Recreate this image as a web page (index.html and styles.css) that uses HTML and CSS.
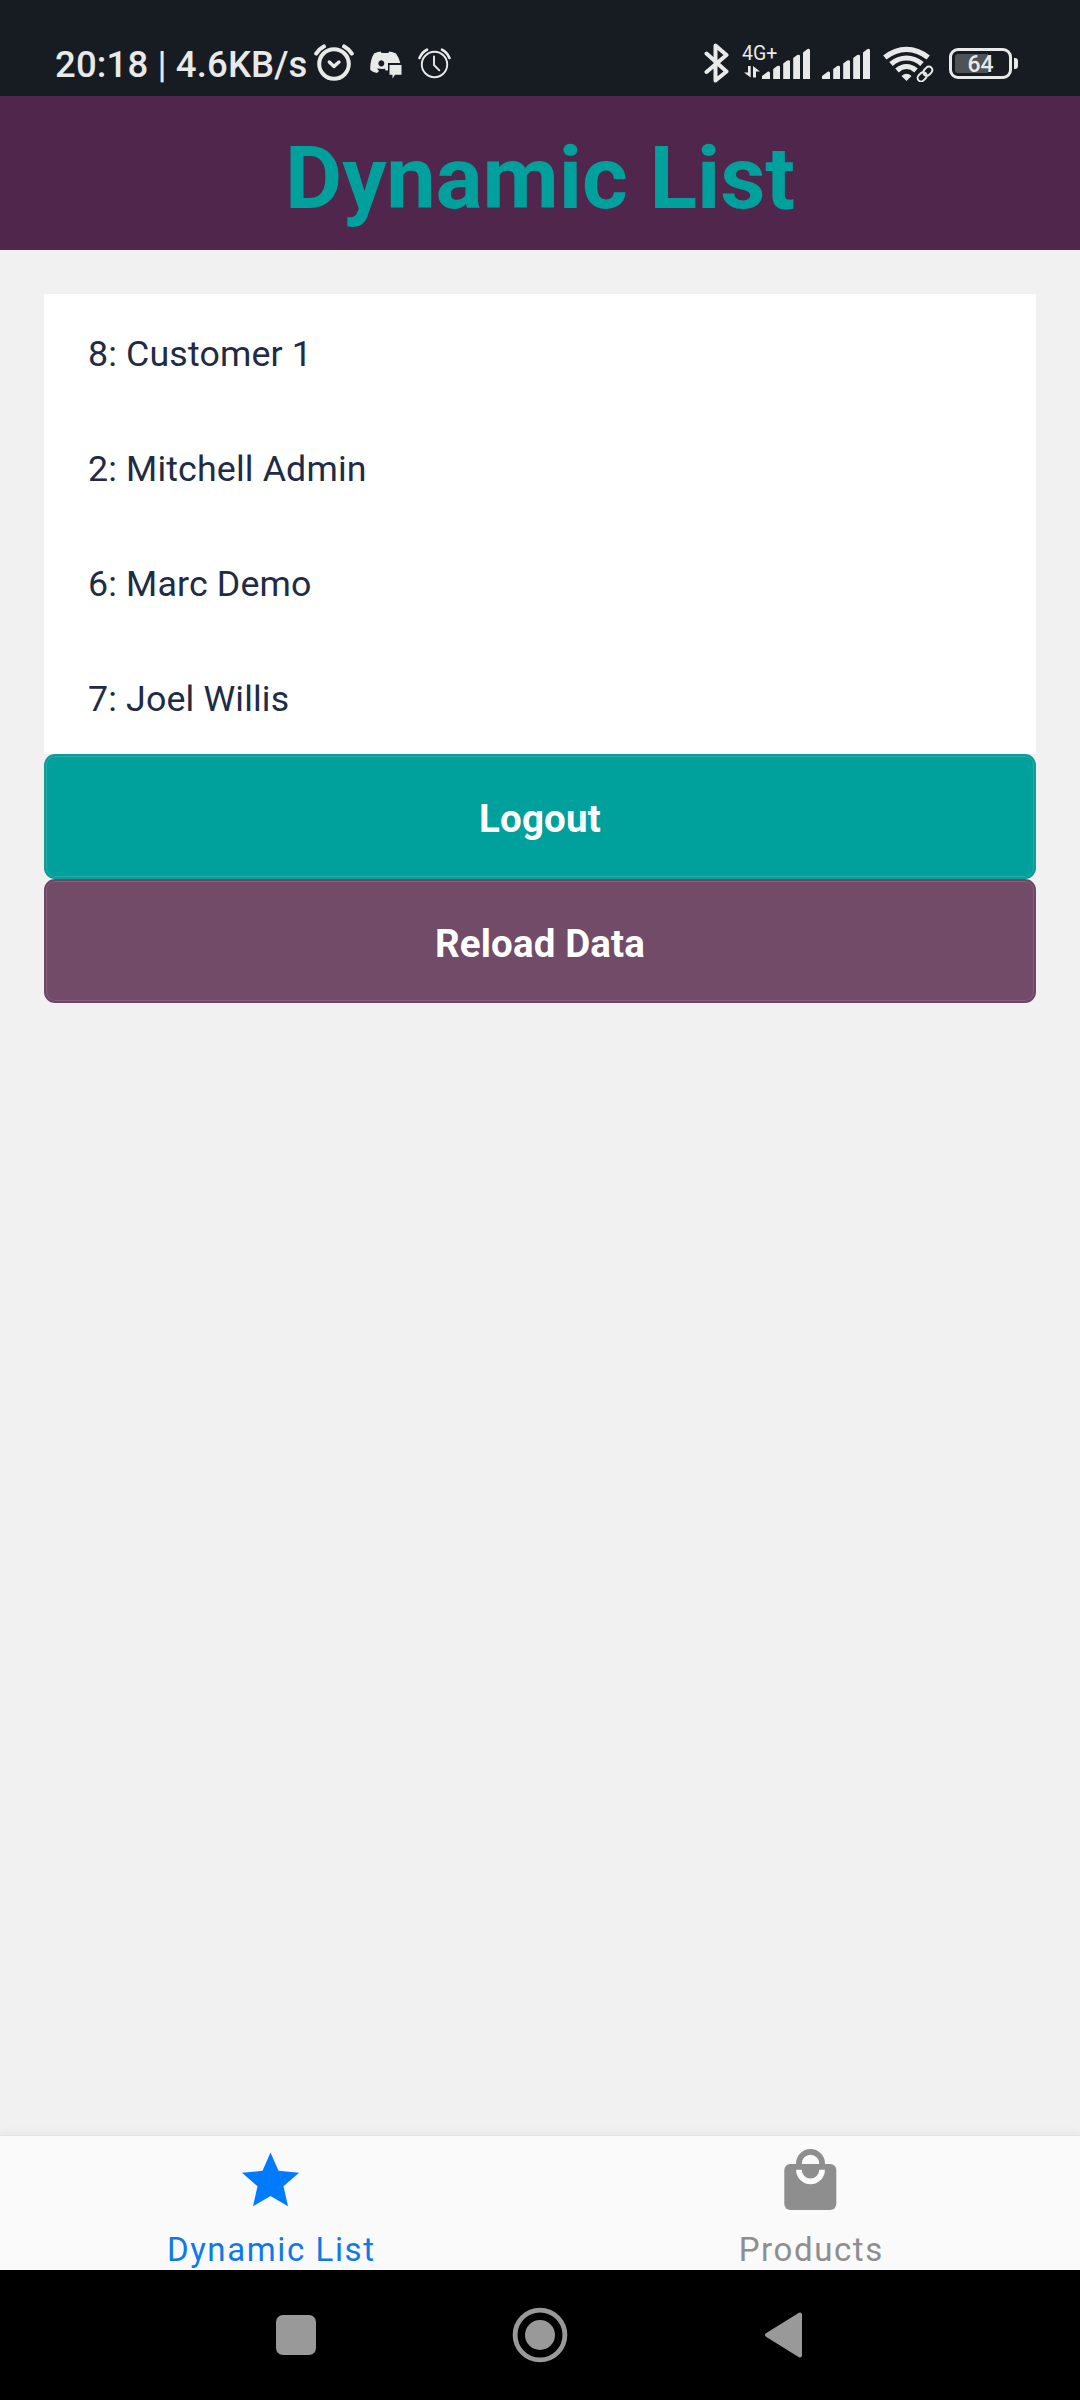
FILE: index.html
```html
<!DOCTYPE html>
<html lang="en">
<head>
<meta charset="utf-8">
<title>Dynamic List</title>
<link rel="stylesheet" href="styles.css">
</head>
<body>
<div class="screen">
  <div class="status">
    <div class="status-left">
      <span class="clock">20:18 | 4.6KB/s</span>
      <svg class="i-alarm" width="40" height="40" viewBox="0 0 40 40" fill="none" stroke="#e8e9e9">
        <circle cx="20" cy="21" r="14.8" stroke-width="4"/>
        <path d="M2.300 10.500Q5 6 9.800 3.500M37.700 10.500Q35 6 30.200 3.500" stroke-width="4.200" stroke-linecap="round"/>
        <path d="M15.300 19l4.700 4.400 5-4.400" stroke-width="3.400" stroke-linecap="round" stroke-linejoin="round"/>
      </svg>
      <svg class="i-chat" width="32" height="28" viewBox="0 0 32 28" fill="#e8e9e9">
        <path fill-rule="evenodd" d="M4 2.500Q7 .8 10.500 .5l1.200 1.500h6.500L19.400.5Q23 .8 26 2.500Q29 6.500 30.300 12H18v7.500H15.500L15 17.800Q12 18.200 7 17.500l2 2.500-2 2Q3 21.500 .3 19Q-.3 10 4 2.500zM11.300 9.200a2.900 3.200 0 1 0 .1 0z"/>
        <path d="M19.500 14h12v9.700h-6.500L22.500 27.500v-3.800h-3z"/>
      </svg>
      <svg class="i-alarm2" width="33" height="32" viewBox="0 0 33 32" fill="none" stroke="#e8e9e9" stroke-width="1.900" stroke-linecap="round">
        <circle cx="16.500" cy="16.500" r="12.700"/>
        <path d="M1.500 10Q4 4 9 1.700M31.500 10Q29 4 24 1.700" stroke-width="2.600"/>
        <path d="M16 8.500v8.500l5.300 5.300"/>
      </svg>
    </div>
    <div class="status-right">
      <svg class="i-bt" width="26" height="40" viewBox="0 0 26 40" fill="none" stroke="#e8e9e9" stroke-width="4" stroke-linecap="round" stroke-linejoin="round">
        <path d="M2.500 10.500l20 18L11.500 37.500V2.500l11 9.500-20 17"/>
      </svg>
      <div class="mobile">
        <span class="net">4G+</span>
        <svg class="i-data" width="16" height="12" viewBox="0 0 16 12" fill="#e8e9e9"><path d="M4 0h2.700v11.500L0 6.500h4zM9 11.500V0l7 5.500h-4v6z"/></svg>
      </div>
      <svg class="i-sig" width="48" height="32" viewBox="0 0 48 32" fill="#e8e9e9">
        <path d="M0 31v-3l6-4.500Q8 23 8 25v6zM11.200 31V21l4-3Q18 17 18 19v12zM21.200 31V15.500l4-3Q28 11.500 28 13.500V31zM31.200 31V10l4-3Q38 6 38 8v23zM41 31V4.500l4.500-3.500Q48 .2 48 2.500V31z"/>
      </svg>
      <svg class="i-sig2" width="48" height="32" viewBox="0 0 48 32" fill="#e8e9e9">
        <path d="M0 31v-3l6-4.500Q8 23 8 25v6zM11.200 31V21l4-3Q18 17 18 19v12zM21.200 31V15.500l4-3Q28 11.500 28 13.500V31zM31.200 31V10l4-3Q38 6 38 8v23zM41 31V4.500l4.500-3.500Q48 .2 48 2.500V31z"/>
      </svg>
      <svg class="i-wifi" width="51" height="36" viewBox="0 0 51 36" fill="none" stroke="#e8e9e9">
        <path d="M1.800 11.500Q12 3.300 23.500 3.300T45.200 11.500M8 18Q15 12 23.500 12T39 18M14 24.500Q18.500 20.500 23.500 20.500T33 24.500" stroke-width="5.200"/>
        <path d="M18.500 30q5-4.500 10 0l-5 5z" fill="#e8e9e9" stroke="none"/>
        <g transform="rotate(-45 42 28)" stroke-width="2">
          <rect x="33" y="24.500" width="10" height="7" rx="3.500"/>
          <rect x="41" y="24.500" width="10" height="7" rx="3.500"/>
        </g>
      </svg>
      <div class="battery"><span class="battery-level">64</span></div>
      <div class="battery-tip"></div>
    </div>
  </div>

  <h1 class="header">Dynamic List</h1>

  <main class="content">
    <ul class="list">
      <li class="row">8: Customer 1</li>
      <li class="row">2: Mitchell Admin</li>
      <li class="row">6: Marc Demo</li>
      <li class="row">7: Joel Willis</li>
    </ul>
    <button class="btn logout">Logout</button>
    <button class="btn reload">Reload Data</button>
  </main>

  <nav class="tabs">
    <a class="tab active">
      <svg width="66" height="66" viewBox="0 0 66 66"><path fill="#007aff" d="M33.500 5.500l8 18.300 20.500 2L46.500 39.200l4.500 20.100L33.500 49 16 59.300 20.500 39.200 5 25.800l20.500-2z"/></svg>
      <span>Dynamic List</span>
    </a>
    <a class="tab">
      <svg width="66" height="66" viewBox="0 0 66 66">
        <rect x="7.300" y="17" width="52" height="46" rx="6" fill="#8e8e8f"/>
        <path d="M21.900 17v-.5a11.600 11.600 0 0 1 23.200 0v.5" fill="none" stroke="#8e8e8f" stroke-width="5.700"/>
        <path d="M21.900 22.800a11.600 11.600 0 0 0 23.200 0" fill="none" stroke="#fafafb" stroke-width="5.700"/>
      </svg>
      <span>Products</span>
    </a>
  </nav>

  <div class="system-nav">
    <div class="key"><svg width="60" height="60" viewBox="0 0 60 60" fill="#999"><rect x="10" y="10" width="40" height="40" rx="7"/></svg></div>
    <div class="key"><svg width="60" height="60" viewBox="0 0 60 60" fill="#999"><circle cx="30" cy="30" r="24.900" fill="none" stroke="#999" stroke-width="4.800"/><circle cx="30" cy="30" r="15"/></svg></div>
    <div class="key"><svg width="60" height="60" viewBox="0 0 60 60" fill="#999" stroke="#999" stroke-width="4" stroke-linejoin="round"><path d="M13 30L46 9.500v41z"/></svg></div>
  </div>
</div>
</body>
</html>
```
FILE: styles.css
```css
* { box-sizing: border-box; }
body { margin: 0; font-family: Roboto, sans-serif; }
svg { display: block; flex: none; }

.screen {
  width: 1080px;
  height: 2400px;
  display: flex;
  flex-direction: column;
  background: #f1f1f1;
  overflow: hidden;
}

.status {
  height: 96px;
  flex: none;
  display: flex;
  justify-content: space-between;
  background: #171b22;
  color: #e8e9e9;
}
.status-left, .status-right { display: flex; align-items: flex-start; }
.status-left { padding-left: 55px; }
.clock {
  width: 259px;
  padding-top: 43px;
  font-size: 36.5px;
  font-weight: 500;
  line-height: 44px;
  letter-spacing: 0.13px;
  white-space: nowrap;
}
.i-alarm { margin-top: 43px; }
.i-chat { margin: 51px 0 0 16px; }
.i-alarm2 { margin: 48px 0 0 16px; }

.status-right { padding-right: 62px; }
.i-bt { margin-top: 43px; }
.mobile { width: 32px; margin: 43px 0 0 12px; }
.net { display: block; font-size: 19.5px; line-height: 21px; height: 23px; white-space: nowrap; }
.i-data { margin-left: 2px; }
.i-sig { margin: 48px 0 0 -12px; }
.i-sig2 { margin: 48px 0 0 12px; }
.i-wifi { margin: 46px 0 0 13px; }
.battery {
  width: 63px;
  height: 31px;
  margin: 48px 0 0 15px;
  padding: 3px;
  border: 3px solid #e8e9e9;
  border-radius: 9px;
}
.battery-level {
  display: block;
  width: 51px;
  height: 19px;
  border-radius: 3px;
  background: linear-gradient(90deg, #4f5257 64%, transparent 64%);
  font-size: 23px;
  font-weight: 500;
  line-height: 21px;
  text-align: center;
}
.battery-tip { width: 4px; height: 11px; margin: 58px 0 0 2px; border-radius: 0 3px 3px 0; background: #e8e9e9; }

.header {
  height: 154px;
  flex: none;
  margin: 0;
  padding-top: 30px;
  background: #51264d;
  color: #00a09d;
  font-size: 88px;
  font-weight: 700;
  line-height: 104px;
  letter-spacing: -0.1px;
  text-align: center;
}

.content { flex: 1; padding: 44px; display: flex; flex-direction: column; }
.list { margin: 0; padding: 0; list-style: none; background: #fff; }
.row {
  height: 115px;
  padding: 0 44px;
  color: #212b45;
  font-size: 35.75px;
  line-height: 121px;
  letter-spacing: 0.15px;
}
.btn {
  border: 2px solid;
  border-radius: 11px;
  color: #fff;
  font: 700 38.5px/45px Roboto, sans-serif;
  letter-spacing: 0.15px;
  text-align: center;
}
.logout { height: 125px; padding: 4px 0 0; background: #00a09d; border-color: #0e9a99; box-shadow: inset 0 0 0 1px #29adab; }
.reload { height: 124px; padding: 5px 0 0; background: #714b67; border-color: #6c4864; box-shadow: inset 0 0 0 1px #875f7f; }

.tabs {
  height: 135px;
  flex: none;
  display: flex;
  background: #fafafb;
  border-top: 1px solid #e2e2e3;
  box-shadow: 0 -2px 10px rgba(0, 0, 0, 0.05);
}
.tab {
  flex: 1;
  padding-top: 11px;
  display: flex;
  flex-direction: column;
  align-items: center;
  color: #8e8e8f;
  font-size: 33px;
  line-height: 39px;
  letter-spacing: 1.6px;
}
.tab span { margin-top: 17px; padding-left: 2.5px; }
.active { color: #1079e8; }

.system-nav {
  height: 130px;
  flex: none;
  display: flex;
  justify-content: center;
  align-items: center;
  background: #000;
}
.key { width: 244px; display: flex; justify-content: center; }
```
